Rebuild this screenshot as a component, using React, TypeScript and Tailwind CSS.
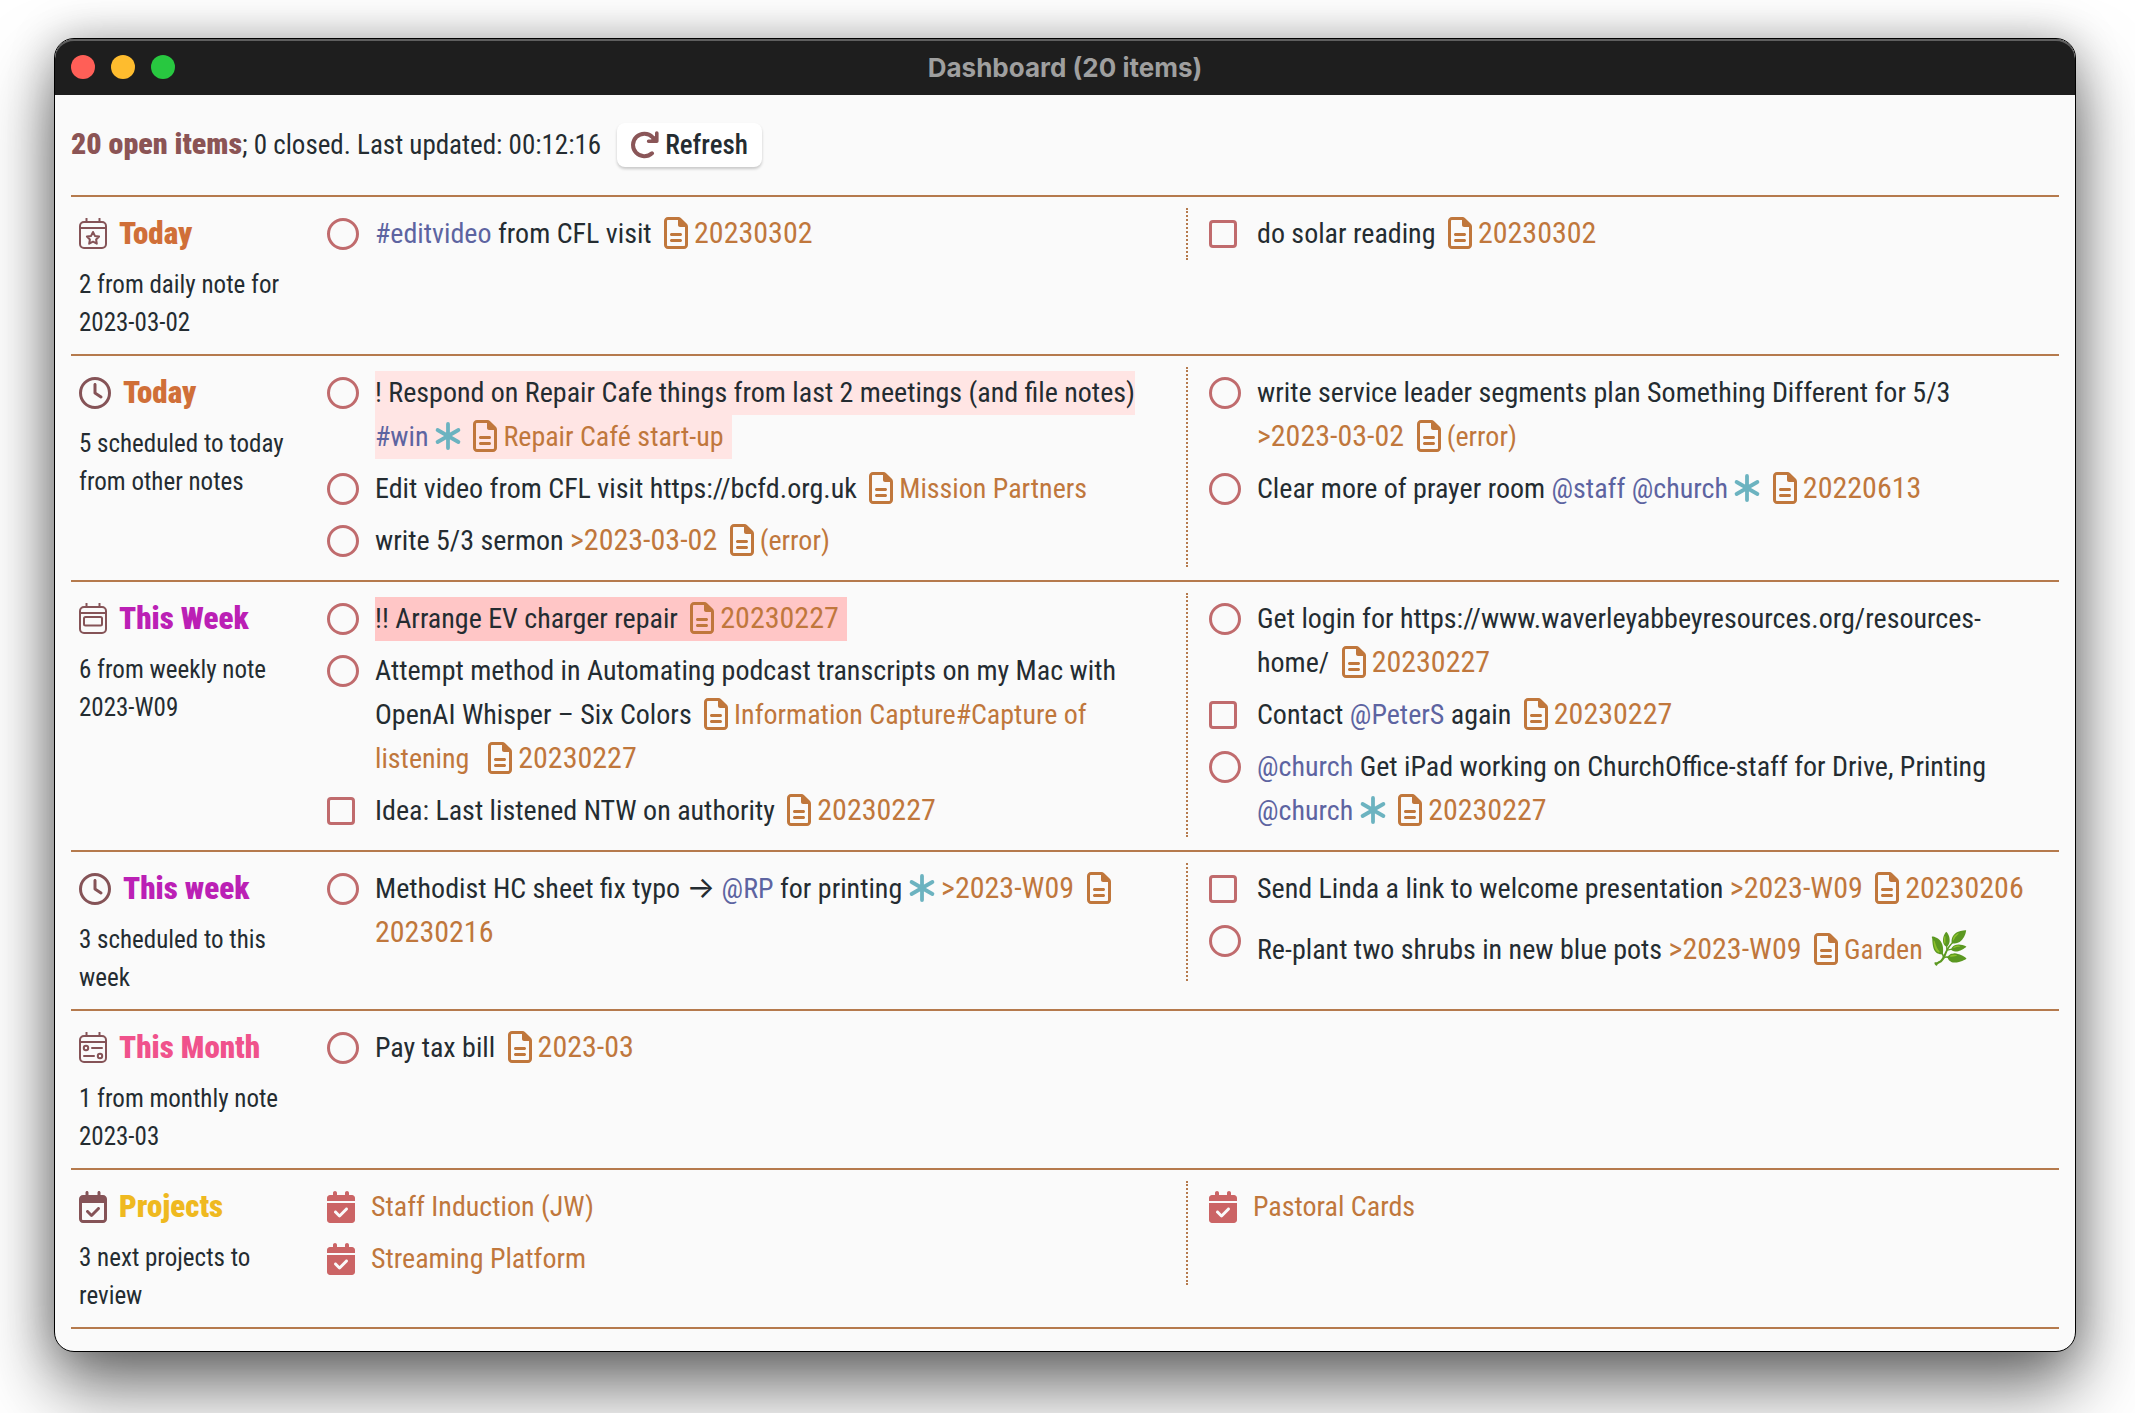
import { useId } from "react";
import type { ReactNode } from "react";
import {
  FaCalendarCheck,
  FaRegCalendarCheck,
  FaRegClock,
  FaRegFileLines,
} from "react-icons/fa6";

/* ---------- icons ---------- */

function CalendarFrame({ children }: { children: ReactNode }) {
  return (
    <svg
      viewBox="0 0 28 32"
      className="h-8 w-7 shrink-0"
      fill="none"
      stroke="currentColor"
      strokeWidth="2"
      strokeLinecap="round"
      strokeLinejoin="round"
      aria-hidden="true"
    >
      <rect x="1" y="4" width="26" height="26" rx="4" />
      <path d="M7.5 0.5v3.5M20.5 0.5v3.5M1 10h26" />
      {children}
    </svg>
  );
}

function CalendarStar() {
  return (
    <CalendarFrame>
      <path d="M14 14l1.9 3.9 4.2.6-3 3 .7 4.2-3.8-2-3.8 2 .7-4.2-3-3 4.2-.6z" />
    </CalendarFrame>
  );
}

function CalendarWeek() {
  return (
    <CalendarFrame>
      <rect x="5" y="14" width="18" height="8.5" rx="1.5" />
    </CalendarFrame>
  );
}

function CalendarMonth() {
  return (
    <CalendarFrame>
      <circle cx="7" cy="16" r="2.2" />
      <path d="M13 16h10M5 24h10" />
      <circle cx="21" cy="24" r="2.2" />
    </CalendarFrame>
  );
}

function RefreshIcon() {
  return (
    <svg
      viewBox="0 0 28 28"
      className="size-7 text-[#8a5658]"
      fill="none"
      stroke="currentColor"
      strokeWidth="4"
      strokeLinecap="round"
      strokeLinejoin="round"
      aria-hidden="true"
    >
      <path d="M21 22.3A11.3 11.3 0 1 1 21.5 6.2L24 8.6" />
      <path d="M25.8 2v8.2h-8.2" strokeWidth="3.6" />
      <path d="M25.8 4v6.2h-6.2z" fill="currentColor" strokeWidth="1" />
    </svg>
  );
}

function Asterisk() {
  return (
    <svg
      viewBox="0 0 26 28"
      className="inline h-7 w-[26px] align-[-4px] text-[#6cb3c0]"
      fill="none"
      stroke="currentColor"
      strokeWidth="3.8"
      strokeLinecap="round"
      aria-hidden="true"
    >
      <path d="M13 2v24M2.6 8l20.8 12M23.4 8L2.6 20" />
    </svg>
  );
}

/* ---------- inline pieces of a task ---------- */

function Tag({ children }: { children: ReactNode }) {
  return <span className="text-[#5d64a1]">{children}</span>;
}

function DateText({ children }: { children: ReactNode }) {
  return <span className="text-3xl leading-none whitespace-nowrap">{children}</span>;
}

function Due({ children }: { children: ReactNode }) {
  return (
    <span className="text-[#c0773c]">
      <DateText>{children}</DateText>
    </span>
  );
}

function Note({ children }: { children: ReactNode }) {
  return (
    <a href="#note" className="text-[#c0773c]">
      <FaRegFileLines className="mr-[6px] ml-[6px] inline h-8 w-6 align-[-6px]" aria-hidden="true" />
      {children}
    </a>
  );
}

function DatedNote({ children }: { children: ReactNode }) {
  return (
    <Note>
      <DateText>{children}</DateText>
    </Note>
  );
}

function Mark({ level, children }: { level: 1 | 2; children: ReactNode }) {
  return (
    <span
      className={
        level === 1 ? "bg-[#ffe5e4] pt-[5px] pr-2 pb-[6px]" : "bg-[#ffc6c6] pt-[5px] pr-2 pb-[6px]"
      }
    >
      {children}
    </span>
  );
}

function Task({ shape = "circle", children }: { shape?: "circle" | "square"; children: ReactNode }) {
  const id = useId();
  return (
    <li className="flex items-start py-1">
      <span className="flex h-11 w-12 shrink-0 items-center">
        <input
          id={id}
          type="checkbox"
          className={
            shape === "circle"
              ? "size-8 appearance-none rounded-full border-3 border-[#c06b6d]"
              : "size-7 appearance-none rounded-sm border-3 border-[#c06b6d]"
          }
        />
      </span>
      <label htmlFor={id} className="min-w-0 text-[28px] leading-[44px]">
        {children}
      </label>
    </li>
  );
}

function Project({ children }: { children: ReactNode }) {
  return (
    <li className="flex items-center py-1">
      <span className="flex h-11 w-11 shrink-0 items-center">
        <FaCalendarCheck className="h-8 w-7 text-[#cb6465]" aria-hidden="true" />
      </span>
      <a href="#project" className="text-[28px] leading-[44px] text-[#c0773c]">
        {children}
      </a>
    </li>
  );
}

/* ---------- page sections ---------- */

type SectionProps = {
  icon: ReactNode;
  title: string;
  titleColor: string;
  summary: string;
  left: ReactNode;
  right?: ReactNode;
};

function Section({ icon, title, titleColor, summary, left, right }: SectionProps) {
  return (
    <section className="grid grid-cols-[242px_1fr] items-start border-b-2 border-[#b57a4d] pt-[11px] pb-3">
      <div className="pt-1 pr-4 pl-2">
        <h2 className={`mb-[10px] flex h-11 items-center gap-3 text-[31px] font-black ${titleColor}`}>
          <span className="text-[#855357]">{icon}</span>
          {title}
        </h2>
        <p className="text-[25px] leading-[38px]">{summary}</p>
      </div>
      <div className="grid grid-cols-2 pb-px">
        <ul className="pr-9 pl-[14px]">{left}</ul>
        {right && (
          <ul className="border-l-2 border-dotted border-[#b57a4d] pr-4 pl-[21px]">{right}</ul>
        )}
      </div>
    </section>
  );
}

export default function App() {
  return (
    <div className="min-h-screen bg-white pt-[38px] pr-[59px] pb-[62px] pl-[54px] font-['Roboto_Condensed','Roboto',sans-serif] text-[#242c31]">
      <div className="overflow-hidden rounded-[20px] border border-black bg-[#fafafa] shadow-[0_36px_70px_rgba(0,0,0,0.55),0_0_44px_rgba(0,0,0,0.25)]">
        <header className="grid h-14 grid-cols-[1fr_auto_1fr] items-center rounded-t-[19px] bg-[#1e1e1e] px-4 shadow-[inset_0_2px_0_#5f5f5f]">
          <div className="flex gap-4">
            <button type="button" aria-label="Close" className="size-6 rounded-full bg-[#ff5f57]" />
            <button type="button" aria-label="Minimize" className="size-6 rounded-full bg-[#febc2e]" />
            <button type="button" aria-label="Zoom" className="size-6 rounded-full bg-[#28c840]" />
          </div>
          <h1 className="font-[Inter,sans-serif] text-[26px] font-bold text-[#9f9f9f]">
            Dashboard (20 items)
          </h1>
        </header>

        <main className="px-4 pb-[22px]">
          <div className="flex h-[102px] items-center gap-4 border-b-2 border-[#b57a4d]">
            <p className="text-[27px]">
              <b className="text-3xl font-black text-[#8b5455]">20 open items</b>; 0 closed. Last updated:
              00:12:16
            </p>
            <button
              type="button"
              className="flex h-11 items-center gap-[6px] rounded-lg bg-white px-[14px] text-[27px] font-medium shadow-[0_2px_3px_rgba(0,0,0,0.2)]"
            >
              <RefreshIcon />
              Refresh
            </button>
          </div>

          <Section
            icon={<CalendarStar />}
            title="Today"
            titleColor="text-[#d06f38]"
            summary="2 from daily note for 2023-03-02"
            left={
              <Task>
                <Tag>#editvideo</Tag> from CFL visit <DatedNote>20230302</DatedNote>
              </Task>
            }
            right={
              <Task shape="square">
                do solar reading <DatedNote>20230302</DatedNote>
              </Task>
            }
          />

          <Section
            icon={<FaRegClock className="size-8" aria-hidden="true" />}
            title="Today"
            titleColor="text-[#d06f38]"
            summary="5 scheduled to today from other notes"
            left={
              <>
                <Task>
                  <Mark level={1}>
                    ! Respond on Repair Cafe things from last 2 meetings (and file notes) <Tag>#win</Tag>{" "}
                    <Asterisk /> <Note>Repair Café start-up</Note>
                  </Mark>
                </Task>
                <Task>
                  Edit video from CFL visit https://bcfd.org.uk <Note>Mission Partners</Note>
                </Task>
                <Task>
                  write 5/3 sermon <Due>&gt;2023-03-02</Due> <Note>(error)</Note>
                </Task>
              </>
            }
            right={
              <>
                <Task>
                  write service leader segments plan Something Different for 5/3 <Due>&gt;2023-03-02</Due>{" "}
                  <Note>(error)</Note>
                </Task>
                <Task>
                  Clear more of prayer room <Tag>@staff</Tag> <Tag>@church</Tag> <Asterisk />{" "}
                  <DatedNote>20220613</DatedNote>
                </Task>
              </>
            }
          />

          <Section
            icon={<CalendarWeek />}
            title="This Week"
            titleColor="text-[#bb20b5]"
            summary="6 from weekly note 2023-W09"
            left={
              <>
                <Task>
                  <Mark level={2}>
                    !! Arrange EV charger repair <DatedNote>20230227</DatedNote>
                  </Mark>
                </Task>
                <Task>
                  Attempt method in Automating podcast transcripts on my Mac with OpenAI Whisper – Six Colors{" "}
                  <Note>Information Capture#Capture of listening</Note>&nbsp; <DatedNote>20230227</DatedNote>
                </Task>
                <Task shape="square">
                  Idea: Last listened NTW on authority <DatedNote>20230227</DatedNote>
                </Task>
              </>
            }
            right={
              <>
                <Task>
                  Get login for https://www.waverleyabbeyresources.org/resources-home/{" "}
                  <DatedNote>20230227</DatedNote>
                </Task>
                <Task shape="square">
                  Contact <Tag>@PeterS</Tag> again <DatedNote>20230227</DatedNote>
                </Task>
                <Task>
                  <Tag>@church</Tag> Get iPad working on ChurchOffice-staff for Drive, Printing{" "}
                  <Tag>@church</Tag> <Asterisk /> <DatedNote>20230227</DatedNote>
                </Task>
              </>
            }
          />

          <Section
            icon={<FaRegClock className="size-8" aria-hidden="true" />}
            title="This week"
            titleColor="text-[#bb20b5]"
            summary="3 scheduled to this week"
            left={
              <Task>
                Methodist HC sheet fix typo{" "}
                <span className="font-[Inter,sans-serif] text-3xl leading-none">→</span> <Tag>@RP</Tag> for
                printing <Asterisk /> <Due>&gt;2023-W09</Due> <DatedNote>20230216</DatedNote>
              </Task>
            }
            right={
              <>
                <Task shape="square">
                  Send Linda a link to welcome presentation <Due>&gt;2023-W09</Due>{" "}
                  <DatedNote>20230206</DatedNote>
                </Task>
                <Task>
                  Re-plant two shrubs in new blue pots <Due>&gt;2023-W09</Due>{" "}
                  <Note>
                    Garden <span className="text-[32px] leading-[58px]">🌿</span>
                  </Note>
                </Task>
              </>
            }
          />

          <Section
            icon={<CalendarMonth />}
            title="This Month"
            titleColor="text-[#f0528c]"
            summary="1 from monthly note 2023-03"
            left={
              <Task>
                Pay tax bill <DatedNote>2023-03</DatedNote>
              </Task>
            }
          />

          <Section
            icon={<FaRegCalendarCheck className="h-8 w-7" aria-hidden="true" />}
            title="Projects"
            titleColor="text-[#efb920]"
            summary="3 next projects to review"
            left={
              <>
                <Project>Staff Induction (JW)</Project>
                <Project>Streaming Platform</Project>
              </>
            }
            right={<Project>Pastoral Cards</Project>}
          />
        </main>
      </div>
    </div>
  );
}
